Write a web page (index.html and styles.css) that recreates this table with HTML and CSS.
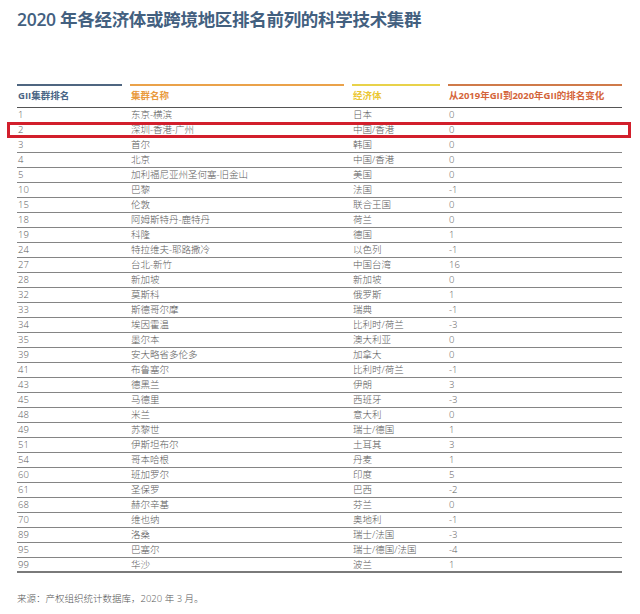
FILE: index.html
```html
<!DOCTYPE html>
<html lang="zh-CN">
<head>
<meta charset="utf-8">
<title>2020 年各经济体或跨境地区排名前列的科学技术集群</title>
<link rel="stylesheet" href="styles.css">
</head>
<body>
<div class="page">
  <h1 class="title">2020 年各经济体或跨境地区排名前列的科学技术集群</h1>
  <div class="table">
    <div class="row head">
      <div class="hc c1">GII集群排名</div>
      <div class="hc c2">集群名称</div>
      <div class="hc c3">经济体</div>
      <div class="hc c4">从2019年GII到2020年GII的排名变化</div>
    </div>
    <div class="row"><div>1</div><div>东京-横滨</div><div>日本</div><div>0</div></div>
    <div class="row hl"><div>2</div><div>深圳-香港-广州</div><div>中国/香港</div><div>0</div></div>
    <div class="row"><div>3</div><div>首尔</div><div>韩国</div><div>0</div></div>
    <div class="row"><div>4</div><div>北京</div><div>中国/香港</div><div>0</div></div>
    <div class="row"><div>5</div><div>加利福尼亚州圣何塞-旧金山</div><div>美国</div><div>0</div></div>
    <div class="row"><div>10</div><div>巴黎</div><div>法国</div><div>-1</div></div>
    <div class="row"><div>15</div><div>伦敦</div><div>联合王国</div><div>0</div></div>
    <div class="row"><div>18</div><div>阿姆斯特丹-鹿特丹</div><div>荷兰</div><div>0</div></div>
    <div class="row"><div>19</div><div>科隆</div><div>德国</div><div>1</div></div>
    <div class="row"><div>24</div><div>特拉维夫-耶路撒冷</div><div>以色列</div><div>-1</div></div>
    <div class="row"><div>27</div><div>台北-新竹</div><div>中国台湾</div><div>16</div></div>
    <div class="row"><div>28</div><div>新加坡</div><div>新加坡</div><div>0</div></div>
    <div class="row"><div>32</div><div>莫斯科</div><div>俄罗斯</div><div>1</div></div>
    <div class="row"><div>33</div><div>斯德哥尔摩</div><div>瑞典</div><div>-1</div></div>
    <div class="row"><div>34</div><div>埃因霍温</div><div>比利时/荷兰</div><div>-3</div></div>
    <div class="row"><div>35</div><div>墨尔本</div><div>澳大利亚</div><div>0</div></div>
    <div class="row"><div>39</div><div>安大略省多伦多</div><div>加拿大</div><div>0</div></div>
    <div class="row"><div>41</div><div>布鲁塞尔</div><div>比利时/荷兰</div><div>-1</div></div>
    <div class="row"><div>43</div><div>德黑兰</div><div>伊朗</div><div>3</div></div>
    <div class="row"><div>45</div><div>马德里</div><div>西班牙</div><div>-3</div></div>
    <div class="row"><div>48</div><div>米兰</div><div>意大利</div><div>0</div></div>
    <div class="row"><div>49</div><div>苏黎世</div><div>瑞士/德国</div><div>1</div></div>
    <div class="row"><div>51</div><div>伊斯坦布尔</div><div>土耳其</div><div>3</div></div>
    <div class="row"><div>54</div><div>哥本哈根</div><div>丹麦</div><div>1</div></div>
    <div class="row"><div>60</div><div>班加罗尔</div><div>印度</div><div>5</div></div>
    <div class="row"><div>61</div><div>圣保罗</div><div>巴西</div><div>-2</div></div>
    <div class="row"><div>68</div><div>赫尔辛基</div><div>芬兰</div><div>0</div></div>
    <div class="row"><div>70</div><div>维也纳</div><div>奥地利</div><div>-1</div></div>
    <div class="row"><div>89</div><div>洛桑</div><div>瑞士/法国</div><div>-3</div></div>
    <div class="row"><div>95</div><div>巴塞尔</div><div>瑞士/德国/法国</div><div>-4</div></div>
    <div class="row last"><div>99</div><div>华沙</div><div>波兰</div><div>1</div></div>
  </div>
  <p class="source">来源：产权组织统计数据库，2020 年 3 月。</p>
</div>
</body>
</html>
```

FILE: styles.css
```css
* { box-sizing: border-box; }
html, body { margin: 0; padding: 0; background: #fff; }
body {
  font-family: "Open Sans", "Noto Sans CJK SC", sans-serif;
  color: #555;
}
.page {
  width: 640px;
  padding: 8px 18px 0 17px;
}
.title {
  margin: 0;
  font-size: 17.5px;
  line-height: 22px;
  font-weight: 600;
  color: #43607f;
  letter-spacing: -0.3px;
}
.table {
  margin-top: 54px;
  width: 605px;
}
.row {
  display: grid;
  grid-template-columns: 105px 214px 88px 174px;
  column-gap: 8px;
  height: 15px;
  border-bottom: 1px solid #858585;
  font-size: 9.5px;
  line-height: 14px;
  font-weight: 300;
  color: #5a5a5a;
}
.row > div { padding-left: 1px; white-space: nowrap; }
.row.head {
  height: 24px;
  border-bottom: 1.5px solid #555;
  font-size: 9.5px;
  font-weight: 700;
  line-height: 19px;
}
.hc { border-top: 2px solid; padding-left: 0; }
.c1 { color: #4a6585; border-color: #4f6680; }
.c2 { color: #e99a3d; border-color: #eaa24a; }
.c3 { color: #ebc734; border-color: #e8d24a; }
.c4 { color: #d4653a; border-color: #cf7a4a; }
.row.last { border-bottom: 2px solid #7a7a7a; }
.row.hl { position: relative; }
.row.hl::after {
  content: "";
  position: absolute;
  top: -1px;
  bottom: -1px;
  left: -10px;
  right: -9px;
  border: 3px solid #d21f2c;
}
.source {
  margin: 19px 0 0;
  font-size: 9.5px;
  line-height: 14px;
  font-weight: 300;
  color: #555;
}
```
